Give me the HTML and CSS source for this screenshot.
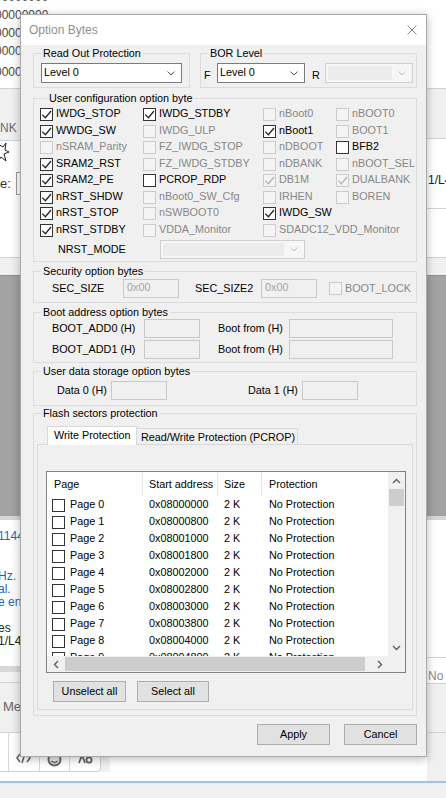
FILE: index.html
```html
<!DOCTYPE html>
<html>
<head>
<meta charset="utf-8">
<link rel="stylesheet" href="styles.css">
</head>
<body>
<div class="app">
  <div class="bg">
    <div class="bg-left">
      <div class="zeros">
        <div class="z z1">00000000</div>
        <div class="z">00000000</div>
        <div class="z">0000</div>
        <div class="z">0000</div>
        <div class="z z5">0000</div>
      </div>
      <div class="sep"></div>
      <div class="nk">NK</div>
      <div class="sep"></div>
      <div class="form">
        <svg class="chip" width="10" height="24" viewBox="0 0 10 24"><path d="M-2 3 L3 6 L6 2 L5 9 L9 11 L4 13 L6 20 L1 16 L-2 21" fill="none" stroke="#222" stroke-width="1"/></svg>
        <div class="form-row"><span class="e">e:</span><span class="finp"></span></div>
      </div>
      <div class="sep"></div>
      <div class="light17"></div>
      <div class="grayband"></div>
      <div class="edge"></div>
      <div class="log">
        <div class="ll blue l1">1144</div>
        <div class="ll blue l2">Hz.</div>
        <div class="ll blue">al.</div>
        <div class="ll blue">e en</div>
        <div class="ll dark l5">es</div>
        <div class="ll dark">1/L4</div>
      </div>
      <div class="split"></div>
      <div class="light10"></div>
      <div class="sep"></div>
      <div class="me">Me</div>
      <div class="sep"></div>
      <div class="iconband">
        <div class="iconbar">
          <div class="ic ic0"></div>
          <div class="ic"><svg width="15" height="12" viewBox="0 0 15 12"><path d="M4 2 L1 6 L4 10 M9 1 L6 11 M11 2 L14 6 L11 10" fill="none" stroke="#666" stroke-width="1.6"/></svg></div>
          <div class="ic"><svg width="15" height="15" viewBox="0 0 15 15"><circle cx="7.5" cy="7.5" r="6" fill="#e6e6e6" stroke="#666" stroke-width="2"/><path d="M4.5 9 Q7.5 12 10.5 9" fill="none" stroke="#666" stroke-width="1.5"/></svg></div>
          <div class="ic"><svg width="15" height="12" viewBox="0 0 15 12"><path d="M1 11 L4 3 L7 11" fill="none" stroke="#666" stroke-width="1.8"/><circle cx="11" cy="8" r="2.6" fill="none" stroke="#666" stroke-width="1.8"/></svg></div>
        </div>
      </div>
    </div>
    <div class="bg-right">
      <div class="r-white88"></div>
      <div class="sep"></div>
      <div class="r-light49"></div>
      <div class="sep"></div>
      <div class="r-l4">1/L4</div>
      <div class="sep"></div>
      <div class="r-white48"></div>
      <div class="sep"></div>
      <div class="light17"></div>
      <div class="grayband"></div>
      <div class="edge"></div>
      <div class="r-white137"></div>
      <div class="sep"></div>
      <div class="r-field">No Protection</div>
      <div class="sep"></div>
      <div class="r-light48"></div>
      <div class="sep"></div>
      <div class="r-light48"></div>
    </div>
  </div>
  <div class="taskline"></div>
  <div class="taskbottom"></div>

  <div class="dialog">
    <div class="titlebar">
      <span class="title">Option Bytes</span>
      <svg class="close" width="10" height="10" viewBox="0 0 10 10"><path d="M0.5 0.5 L9.5 9.5 M9.5 0.5 L0.5 9.5" stroke="#8a8a8a" stroke-width="1"/></svg>
    </div>
    <div class="body">
      <div class="row1">
        <div class="group g-rop">
          <div class="legend">Read Out Protection</div>
          <div class="combo c-rop"><span class="ctext">Level 0</span><svg width="8" height="5" viewBox="0 0 8 5"><path d="M0.5 0.5 L4 4 L7.5 0.5" fill="none" stroke="#555"/></svg></div>
        </div>
        <div class="group g-bor">
          <div class="legend">BOR Level</div>
          <div class="bor-row">
            <span class="fr">F</span>
            <div class="combo c-bor"><span class="ctext">Level 0</span><svg width="8" height="5" viewBox="0 0 8 5"><path d="M0.5 0.5 L4 4 L7.5 0.5" fill="none" stroke="#555"/></svg></div>
            <span class="fr r">R</span>
            <div class="combo dis c-bor"><span class="field"></span><svg width="8" height="5" viewBox="0 0 8 5"><path d="M0.5 0.5 L4 4 L7.5 0.5" fill="none" stroke="#bbb"/></svg></div>
          </div>
        </div>
      </div>

      <div class="group g-user">
        <div class="legend">User configuration option byte</div>
        <div class="cbgrid">
          <div class="cell"><span class="cb"><svg viewBox="0 0 11 11"><path d="M1.3 5.6 L4.4 8.7 L10 2"/></svg></span><span class="lbl">IWDG_STOP</span></div>
          <div class="cell"><span class="cb"><svg viewBox="0 0 11 11"><path d="M1.3 5.6 L4.4 8.7 L10 2"/></svg></span><span class="lbl">IWDG_STDBY</span></div>
          <div class="cell"><span class="cb dis"></span><span class="lbl dim">nBoot0</span></div>
          <div class="cell"><span class="cb dis"></span><span class="lbl dim">nBOOT0</span></div>

          <div class="cell"><span class="cb"><svg viewBox="0 0 11 11"><path d="M1.3 5.6 L4.4 8.7 L10 2"/></svg></span><span class="lbl">WWDG_SW</span></div>
          <div class="cell"><span class="cb dis"></span><span class="lbl dim">IWDG_ULP</span></div>
          <div class="cell"><span class="cb"><svg viewBox="0 0 11 11"><path d="M1.3 5.6 L4.4 8.7 L10 2"/></svg></span><span class="lbl">nBoot1</span></div>
          <div class="cell"><span class="cb dis"></span><span class="lbl dim">BOOT1</span></div>

          <div class="cell"><span class="cb dis"></span><span class="lbl dim">nSRAM_Parity</span></div>
          <div class="cell"><span class="cb dis"></span><span class="lbl dim">FZ_IWDG_STOP</span></div>
          <div class="cell"><span class="cb dis"></span><span class="lbl dim">nDBOOT</span></div>
          <div class="cell"><span class="cb"></span><span class="lbl">BFB2</span></div>

          <div class="cell"><span class="cb"><svg viewBox="0 0 11 11"><path d="M1.3 5.6 L4.4 8.7 L10 2"/></svg></span><span class="lbl">SRAM2_RST</span></div>
          <div class="cell"><span class="cb dis"></span><span class="lbl dim">FZ_IWDG_STDBY</span></div>
          <div class="cell"><span class="cb dis"></span><span class="lbl dim">nDBANK</span></div>
          <div class="cell"><span class="cb dis"></span><span class="lbl dim">nBOOT_SEL</span></div>

          <div class="cell"><span class="cb"><svg viewBox="0 0 11 11"><path d="M1.3 5.6 L4.4 8.7 L10 2"/></svg></span><span class="lbl">SRAM2_PE</span></div>
          <div class="cell"><span class="cb"></span><span class="lbl">PCROP_RDP</span></div>
          <div class="cell"><span class="cb dis"><svg viewBox="0 0 11 11"><path d="M1.3 5.6 L4.4 8.7 L10 2"/></svg></span><span class="lbl dim">DB1M</span></div>
          <div class="cell"><span class="cb dis"><svg viewBox="0 0 11 11"><path d="M1.3 5.6 L4.4 8.7 L10 2"/></svg></span><span class="lbl dim">DUALBANK</span></div>

          <div class="cell"><span class="cb"><svg viewBox="0 0 11 11"><path d="M1.3 5.6 L4.4 8.7 L10 2"/></svg></span><span class="lbl">nRST_SHDW</span></div>
          <div class="cell"><span class="cb dis"></span><span class="lbl dim">nBoot0_SW_Cfg</span></div>
          <div class="cell"><span class="cb dis"></span><span class="lbl dim">IRHEN</span></div>
          <div class="cell"><span class="cb dis"></span><span class="lbl dim">BOREN</span></div>

          <div class="cell"><span class="cb"><svg viewBox="0 0 11 11"><path d="M1.3 5.6 L4.4 8.7 L10 2"/></svg></span><span class="lbl">nRST_STOP</span></div>
          <div class="cell"><span class="cb dis"></span><span class="lbl dim">nSWBOOT0</span></div>
          <div class="cell"><span class="cb"><svg viewBox="0 0 11 11"><path d="M1.3 5.6 L4.4 8.7 L10 2"/></svg></span><span class="lbl">IWDG_SW</span></div>
          <div class="cell"></div>

          <div class="cell"><span class="cb"><svg viewBox="0 0 11 11"><path d="M1.3 5.6 L4.4 8.7 L10 2"/></svg></span><span class="lbl">nRST_STDBY</span></div>
          <div class="cell"><span class="cb dis"></span><span class="lbl dim">VDDA_Monitor</span></div>
          <div class="cell span2"><span class="cb dis"></span><span class="lbl dim">SDADC12_VDD_Monitor</span></div>
        </div>
        <div class="nrst-row">
          <span class="nrst-lbl">NRST_MODE</span>
          <div class="combo dis c-nrst"><span class="field"></span><svg width="8" height="5" viewBox="0 0 8 5"><path d="M0.5 0.5 L4 4 L7.5 0.5" fill="none" stroke="#bbb"/></svg></div>
        </div>
      </div>

      <div class="group g-sec">
        <div class="legend">Security option bytes</div>
        <div class="frow sec-row">
          <span class="flbl w-secsize">SEC_SIZE</span>
          <span class="inp w55">0x00</span>
          <span class="flbl w-secsize2">SEC_SIZE2</span>
          <span class="inp w55">0x00</span>
          <span class="cb dis bootlock"></span>
          <span class="lbl dim bl-lbl">BOOT_LOCK</span>
        </div>
      </div>

      <div class="group g-boot">
        <div class="legend">Boot address option bytes</div>
        <div class="frow boot-row">
          <span class="flbl w-boot">BOOT_ADD0 (H)</span>
          <span class="inp w55"></span>
          <span class="flbl w-from">Boot from (H)</span>
          <span class="inp w104"></span>
        </div>
        <div class="frow boot-row second">
          <span class="flbl w-boot">BOOT_ADD1 (H)</span>
          <span class="inp w55"></span>
          <span class="flbl w-from">Boot from (H)</span>
          <span class="inp w104"></span>
        </div>
      </div>

      <div class="group g-data">
        <div class="legend">User data storage option bytes</div>
        <div class="frow data-row">
          <span class="flbl w-data">Data 0 (H)</span>
          <span class="inp w55"></span>
          <span class="flbl w-data d1">Data 1 (H)</span>
          <span class="inp w55"></span>
        </div>
      </div>

      <div class="group g-flash">
        <div class="legend">Flash sectors protection</div>
        <div class="tabs">
          <div class="tab active">Write Protection</div>
          <div class="tab">Read/Write Protection (PCROP)</div>
        </div>
        <div class="tabpanel">
          <div class="list">
            <div class="lv">
              <div class="lv-head">
                <span class="c1">Page</span><span class="c2">Start address</span><span class="c3">Size</span><span class="c4">Protection</span>
              </div>
              <div class="lv-row"><span class="c1"><span class="cb"></span><span class="pg">Page 0</span></span><span class="c2">0x08000000</span><span class="c3">2 K</span><span class="c4">No Protection</span></div>
              <div class="lv-row"><span class="c1"><span class="cb"></span><span class="pg">Page 1</span></span><span class="c2">0x08000800</span><span class="c3">2 K</span><span class="c4">No Protection</span></div>
              <div class="lv-row"><span class="c1"><span class="cb"></span><span class="pg">Page 2</span></span><span class="c2">0x08001000</span><span class="c3">2 K</span><span class="c4">No Protection</span></div>
              <div class="lv-row"><span class="c1"><span class="cb"></span><span class="pg">Page 3</span></span><span class="c2">0x08001800</span><span class="c3">2 K</span><span class="c4">No Protection</span></div>
              <div class="lv-row"><span class="c1"><span class="cb"></span><span class="pg">Page 4</span></span><span class="c2">0x08002000</span><span class="c3">2 K</span><span class="c4">No Protection</span></div>
              <div class="lv-row"><span class="c1"><span class="cb"></span><span class="pg">Page 5</span></span><span class="c2">0x08002800</span><span class="c3">2 K</span><span class="c4">No Protection</span></div>
              <div class="lv-row"><span class="c1"><span class="cb"></span><span class="pg">Page 6</span></span><span class="c2">0x08003000</span><span class="c3">2 K</span><span class="c4">No Protection</span></div>
              <div class="lv-row"><span class="c1"><span class="cb"></span><span class="pg">Page 7</span></span><span class="c2">0x08003800</span><span class="c3">2 K</span><span class="c4">No Protection</span></div>
              <div class="lv-row"><span class="c1"><span class="cb"></span><span class="pg">Page 8</span></span><span class="c2">0x08004000</span><span class="c3">2 K</span><span class="c4">No Protection</span></div>
              <div class="lv-row"><span class="c1"><span class="cb"></span><span class="pg">Page 9</span></span><span class="c2">0x08004800</span><span class="c3">2 K</span><span class="c4">No Protection</span></div>
            </div>
            <div class="vscroll">
              <div class="sbtn"><svg width="9" height="6" viewBox="0 0 9 6"><path d="M1 5 L4.5 1.5 L8 5" fill="none" stroke="#606060" stroke-width="1.4"/></svg></div>
              <div class="vthumb"></div>
              <div class="sfill"></div>
              <div class="sbtn"><svg width="9" height="6" viewBox="0 0 9 6"><path d="M1 1 L4.5 4.5 L8 1" fill="none" stroke="#606060" stroke-width="1.4"/></svg></div>
            </div>
            <div class="hscroll">
              <div class="sbtn h"><svg width="6" height="9" viewBox="0 0 6 9"><path d="M5 1 L1.5 4.5 L5 8" fill="none" stroke="#606060" stroke-width="1.4"/></svg></div>
              <div class="hthumb"></div>
              <div class="sfill"></div>
              <div class="sbtn h"><svg width="6" height="9" viewBox="0 0 6 9"><path d="M1 1 L4.5 4.5 L1 8" fill="none" stroke="#606060" stroke-width="1.4"/></svg></div>
            </div>
            <div class="corner"></div>
          </div>
          <div class="btnrow">
            <button class="btn b-unsel">Unselect all</button>
            <button class="btn b-sel">Select all</button>
          </div>
        </div>
      </div>

      <div class="footer">
        <button class="btn">Apply</button>
        <button class="btn">Cancel</button>
      </div>
    </div>
  </div>
</div>
</body>
</html>
```

FILE: styles.css
```css
* { box-sizing: border-box; }
html, body { margin: 0; padding: 0; }
body {
  width: 446px;
  height: 798px;
  overflow: hidden;
  font-family: "Liberation Sans", Arial, sans-serif;
}
.app {
  position: relative;
  width: 446px;
  height: 798px;
  background: #fff;
  overflow: hidden;
}

/* ---------- background application ---------- */
.bg {
  display: flex;
  justify-content: space-between;
  height: 781px;
}
.bg-left { width: 110px; display: flex; flex-direction: column; }
.bg-right { width: 19px; display: flex; flex-direction: column; }
.bg-left > div, .bg-right > div { flex: none; }
.sep { height: 1px; background: #d2d2d2; }

.zeros {
  height: 88px;
  background: #fff;
  color: #474747;
  font-size: 12px;
  line-height: 18px;
  white-space: nowrap;
  overflow: hidden;
}
.zeros .z { margin-left: -5px; }
.zeros .z1 { margin-top: -12px; }
.zeros .z5 { margin-top: 3px; }

.nk {
  height: 51px;
  background: #f0f0f0;
  color: #6b6b6b;
  font-size: 12px;
  line-height: 14px;
  padding-top: 32px;
}
.form { height: 116px; background: #fff; }
.chip { display: block; }
.form-row { display: flex; align-items: center; margin-top: 7px; height: 23px; }
.form-row .e { width: 16px; font-size: 13px; color: #333; }
.form-row .finp { width: 80px; height: 23px; border: 1px solid #9a9a9a; }
.light17 { height: 17px; background: #f0f0f0; }
.grayband { height: 241px; background: #a2a2a2; border-top: 1px solid #8f8f8f; }
.edge { height: 4px; background: #d6d6d6; }
.log { height: 146px; background: #fff; font-size: 12px; white-space: nowrap; overflow: hidden; }
.ll { line-height: 13px; margin-left: -2px; }
.ll.blue { color: #2a5fb5; }
.ll.dark { color: #222; }
.l1 { margin-top: 10px; }
.l2 { margin-top: 27px; }
.l5 { margin-top: 13px; }
.split { height: 6px; background: #d8d8d8; }
.light10 { height: 10px; background: #f3f3f3; }
.me {
  height: 49px;
  background: #f0f0f0;
  color: #666;
  font-size: 13px;
  line-height: 14px;
  padding: 17px 0 0 3px;
}
.iconband { height: 39px; background: #f0f0f0; }
.iconbar {
  width: 101px;
  height: 39px;
  background: #fff;
  display: flex;
  border-right: 1px solid #d0d0d0;
  border-bottom: 1px solid #d0d0d0;
  border-bottom-right-radius: 4px;
}
.ic {
  width: 31px;
  border-left: 1px solid #d8d8d8;
  display: flex;
  justify-content: center;
  align-items: flex-start;
  padding-top: 19px;
}
.ic0 { width: 8px; border-left: none; }
.ic svg { display: block; }

.r-white88 { height: 88px; background: #fff; }
.r-light49 { height: 49px; background: #f0f0f0; }
.r-l4 {
  height: 69px;
  background: #fff;
  font-size: 12px;
  line-height: 14px;
  padding: 34px 0 0 1px;
  color: #222;
  white-space: nowrap;
  overflow: hidden;
}
.r-white48 { height: 48px; background: #fff; }
.r-white137 { height: 137px; background: #fff; }
.r-field {
  height: 25px;
  background: #fff;
  color: #8a8a8a;
  font-size: 12px;
  line-height: 14px;
  padding: 11px 0 0 1px;
  white-space: nowrap;
  overflow: hidden;
}
.r-light48 { height: 48px; background: #f0f0f0; }

.taskline { height: 2px; background: #9cc3e8; }
.taskbottom { height: 15px; background: #f0f0f0; }

/* ---------- dialog ---------- */
.dialog {
  position: absolute;
  left: 20px;
  top: 14px;
  width: 407px;
  height: 743px;
  background: #f0f0f0;
  border: 1px solid #a9a9a9;
  box-shadow: 0 2px 9px rgba(0, 0, 0, 0.28);
  font-size: 10.8px;
  color: #000;
  display: flex;
  flex-direction: column;
}
.titlebar {
  height: 30px;
  background: #fff;
  display: flex;
  align-items: center;
  justify-content: space-between;
  padding: 0 9px 0 8px;
  flex: none;
}
.title { font-size: 12px; color: #8f8f8f; }
.close { display: block; }

.body {
  padding: 8px 9px 0 12px;
  display: flex;
  flex-direction: column;
}

.group {
  border: 1px solid #dcdcdc;
  display: flex;
  flex-direction: column;
  flex: none;
}
.legend {
  align-self: flex-start;
  margin: -7px 0 0 7px;
  padding: 0 2px;
  background: #f0f0f0;
  line-height: 13px;
  height: 13px;
  white-space: nowrap;
}

.row1 { display: flex; gap: 10px; height: 35px; flex: none; }
.g-rop { width: 157px; height: 35px; }
.g-bor { flex: 1; height: 35px; }

.combo {
  height: 20px;
  border: 1px solid #7a7a7a;
  background: #fff;
  display: flex;
  align-items: center;
  justify-content: space-between;
  padding: 0 6px 0 2px;
}
.combo svg { display: block; flex: none; }
.ctext { line-height: 13px; margin-top: -2px; white-space: nowrap; }
.combo.dis {
  border-color: #cfcfcf;
  background: #f6f6f6;
  padding: 2px 6px 2px 2px;
}
.combo .field { align-self: stretch; flex: 1; background: #ececec; margin-right: 6px; }
.c-rop { margin: 3px 7px 0 7px; }

.bor-row { display: flex; align-items: flex-start; margin-top: 3px; padding-left: 3px; }
.fr { width: 13px; padding-top: 6px; line-height: 13px; flex: none; }
.fr.r { margin-left: 7px; }
.c-bor { width: 88px; flex: none; }

.g-user { height: 164px; margin-top: 10px; padding-left: 6px; }
.cbgrid {
  display: grid;
  grid-template-columns: 103px 120px 73px 1fr;
  grid-auto-rows: 16.5px;
  margin-top: 3px;
}
.cell { display: flex; align-items: flex-start; gap: 3px; white-space: nowrap; }
.cell.span2 { grid-column: span 2; }
.cb {
  width: 13px;
  height: 13px;
  border: 1px solid #333;
  background: #fff;
  flex: none;
  display: block;
}
.cb svg { display: block; width: 11px; height: 11px; fill: none; stroke: #222; stroke-width: 1.25; }
.cb.dis { border-color: #cccccc; background: #f4f4f4; }
.cb.dis svg { stroke: #b2b2b2; }
.lbl { line-height: 13px; margin-top: -1px; white-space: nowrap; }
.dim { color: #878787; }

.nrst-row { display: flex; align-items: center; height: 19px; }
.nrst-lbl { width: 102px; margin-left: 18px; line-height: 13px; flex: none; }
.c-nrst { width: 145px; height: 19px; flex: none; }

.frow { display: flex; align-items: center; height: 19px; }
.flbl { line-height: 13px; white-space: nowrap; flex: none; }
.inp {
  height: 19px;
  border: 1px solid #c9c9c9;
  background: #f0f0f0;
  color: #a3a3a3;
  line-height: 15px;
  padding-left: 3px;
  flex: none;
}
.w55 { width: 56px; }
.w104 { width: 104px; }

.g-sec { height: 32px; margin-top: 9px; }
.sec-row { margin-top: 1px; padding-left: 18px; }
.w-secsize { width: 71px; }
.w-secsize2 { width: 66px; margin-left: 16px; }
.bootlock { margin-left: 12px; }
.bl-lbl { margin-left: 3px; margin-top: 0; }

.g-boot { height: 51px; margin-top: 9px; }
.boot-row { padding-left: 18px; }
.boot-row.second { margin-top: 2px; }
.w-boot { width: 92px; }
.w-from { width: 71px; margin-left: 18px; }

.g-data { height: 35px; margin-top: 8px; }
.data-row { margin-top: 3px; padding-left: 23px; }
.w-data { width: 54px; }
.w-data.d1 { margin-left: 81px; }

.g-flash { height: 303px; margin-top: 7px; }
.tabs {
  display: flex;
  align-items: flex-end;
  height: 18px;
  margin: 6px 0 0 13px;
  position: relative;
  z-index: 1;
}
.tab {
  height: 16px;
  width: 161px;
  background: #f0f0f0;
  border: 1px solid #d9d9d9;
  border-left: none;
  border-bottom: none;
  padding-left: 4px;
  line-height: 16px;
  white-space: nowrap;
  overflow: hidden;
}
.tab.active {
  width: 90px;
  height: 19px;
  margin-bottom: -1px;
  background: #fff;
  border-left: 1px solid #d9d9d9;
  padding-left: 6px;
  line-height: 17px;
}
.tabpanel {
  height: 266px;
  margin: 0 3px;
  border: 1px solid #d9d9d9;
  background: #f0f0f0;
}

.list {
  margin: 26px 0 0 8px;
  width: 360px;
  height: 202px;
  border: 1px solid #838383;
  background: #fff;
  display: grid;
  grid-template-columns: 341px 17px;
  grid-template-rows: 184px 16px;
}
.lv { overflow: hidden; }
.lv-head { display: flex; height: 24px; align-items: stretch; }
.lv-head > span {
  display: flex;
  align-items: center;
  border-right: 1px solid #e5e5e5;
}
.lv-head > .c4 { border-right: none; }
.c1 { width: 96px; padding-left: 7px; flex: none; }
.c2 { width: 75px; padding-left: 6px; flex: none; }
.c3 { width: 44px; padding-left: 6px; flex: none; }
.c4 { flex: 1; padding-left: 7px; white-space: nowrap; }
.lv-row { display: flex; height: 17px; align-items: center; white-space: nowrap; }
.lv-head + .lv-row { margin-top: 1px; }
.lv-row > span { line-height: 13px; }
.lv-row > .c2, .lv-row > .c3, .lv-row > .c4 { margin-top: -2px; }
.lv-row .c1 { display: flex; align-items: center; padding-left: 5px; }
.pg { margin-left: 5px; margin-top: -2px; }

.vscroll { background: #f0f0f0; display: flex; flex-direction: column; }
.sbtn { width: 17px; height: 17px; display: flex; align-items: center; justify-content: center; flex: none; }
.sbtn.h { height: 16px; }
.vthumb { height: 17px; margin: 0 1px; background: #cdcdcd; flex: none; }
.sfill { flex: 1; }
.hscroll { background: #f0f0f0; display: flex; }
.hthumb { width: 300px; margin: 1px 0 1px 1px; background: #cdcdcd; flex: none; }
.corner { background: #f0f0f0; }

.btn {
  font-family: "Liberation Sans", Arial, sans-serif;
  font-size: 10.8px;
  color: #000;
  height: 21px;
  width: 73px;
  padding: 0;
  margin: 0;
  background: #e1e1e1;
  border: 1px solid #adadad;
  border-radius: 0;
  line-height: 19px;
}
.btnrow { display: flex; margin: 8px 0 0 15px; }
.b-sel { width: 72px; margin-left: 11px; }

.footer {
  display: flex;
  justify-content: flex-end;
  gap: 14px;
  margin-top: 8px;
  flex: none;
}
```
